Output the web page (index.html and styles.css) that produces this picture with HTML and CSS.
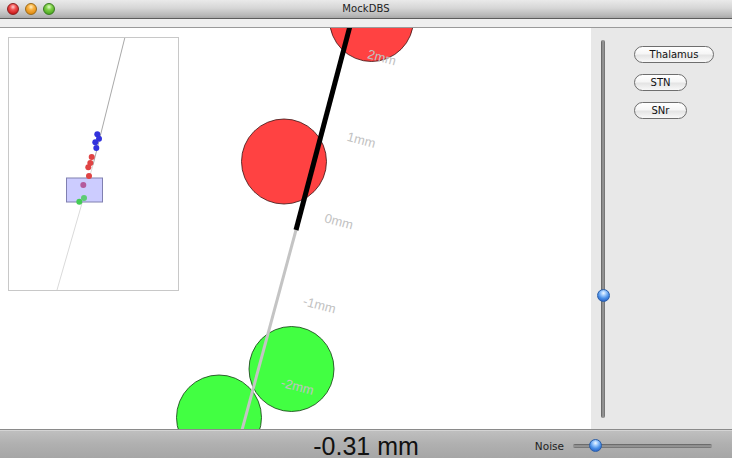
FILE: index.html
```html
<!DOCTYPE html>
<html>
<head>
<meta charset="utf-8">
<title>MockDBS</title>
<link rel="stylesheet" href="styles.css">
</head>
<body>
<div class="window">
  <div class="titlebar">
    <div class="lights">
      <span class="light red"></span>
      <span class="light yellow"></span>
      <span class="light green"></span>
    </div>
    <div class="title">MockDBS</div>
  </div>
  <div class="toolbar"></div>
  <div class="main">
    <div class="canvas">
      <svg class="scene" width="591" height="401" viewBox="0 0 591 401">
        <circle cx="371.5" cy="-8.5" r="42" fill="#ff4242" stroke="#3a1010" stroke-width="0.8"/>
        <circle cx="284" cy="133.5" r="42.5" fill="#ff4242" stroke="#3a1010" stroke-width="0.8"/>
        <circle cx="291.5" cy="341" r="42.5" fill="#42ff42" stroke="#103a10" stroke-width="0.8"/>
        <circle cx="219" cy="389.5" r="42.5" fill="#42ff42" stroke="#103a10" stroke-width="0.8"/>
        <line x1="296" y1="202" x2="242" y2="402" stroke="#c4c4c4" stroke-width="3"/>
        <line x1="350" y1="-2" x2="296" y2="202" stroke="#000" stroke-width="5"/>
        <g class="labels">
          <text x="382" y="34" transform="rotate(15 382 29.5)">2mm</text>
          <text x="361.5" y="116.5" transform="rotate(15 361.5 112)">1mm</text>
          <text x="339" y="198" transform="rotate(15 339 193.5)">0mm</text>
          <text x="319.5" y="281.5" transform="rotate(15 319.5 277)">-1mm</text>
          <text x="297.5" y="363" transform="rotate(15 297.5 358.5)">-2mm</text>
        </g>
      </svg>
      <div class="minimap">
        <svg width="169" height="252" viewBox="1 1 169 252">
          <line x1="117" y1="0" x2="85" y2="128" stroke="#a8a8a8" stroke-width="1"/>
          <line x1="85" y1="128" x2="49" y2="253" stroke="#dadada" stroke-width="1"/>
          <rect x="58.5" y="141" width="36" height="24" fill="#ccccff" stroke="#8080b0" stroke-width="1"/>
          <g fill="#3232dc">
            <circle cx="89.3" cy="97.3" r="3"/>
            <circle cx="91" cy="101.7" r="3"/>
            <circle cx="87.3" cy="105.3" r="3"/>
            <circle cx="88.3" cy="111" r="3"/>
          </g>
          <g fill="#e04444">
            <circle cx="83.7" cy="120" r="3"/>
            <circle cx="82.3" cy="126" r="3"/>
            <circle cx="80.3" cy="130.3" r="3"/>
            <circle cx="81" cy="139" r="3"/>
          </g>
          <circle cx="75.3" cy="148" r="3" fill="#b45a9c"/>
          <circle cx="76" cy="161" r="3" fill="#5ccc74"/>
          <circle cx="71.3" cy="164.7" r="3" fill="#44cc55"/>
        </svg>
      </div>
    </div>
    <div class="side">
      <div class="vslider">
        <div class="vtrack"></div>
        <div class="knob vknob"></div>
      </div>
      <div class="buttons">
        <button class="pill wide">Thalamus</button>
        <button class="pill">STN</button>
        <button class="pill">SNr</button>
      </div>
    </div>
  </div>
  <div class="bottombar">
    <div class="spacer"></div>
    <div class="depth">-0.31 mm</div>
    <div class="noise">
      <span class="noise-label">Noise</span>
      <div class="hslider">
        <div class="htrack"></div>
        <div class="knob hknob"></div>
      </div>
    </div>
  </div>
</div>
</body>
</html>
```

FILE: styles.css
```css
html, body {
  margin: 0;
  padding: 0;
  width: 732px;
  height: 458px;
  overflow: hidden;
  background: #ffffff;
}

.window {
  display: flex;
  flex-direction: column;
  width: 732px;
  height: 458px;
  font-family: "DejaVu Sans", "Liberation Sans", sans-serif;
}

.titlebar {
  position: relative;
  height: 18px;
  flex: none;
  background: linear-gradient(#eaeaea, #d6d6d6 45%, #b8b8b8 85%, #a8a8a8);
  border-bottom: 1px solid #5c5c5c;
  display: flex;
  align-items: center;
  justify-content: center;
}

.lights {
  position: absolute;
  left: 7px;
  top: 3px;
  display: flex;
  gap: 6px;
}

.light {
  width: 12px;
  height: 12px;
  border-radius: 50%;
  box-sizing: border-box;
}

.light.red {
  background: radial-gradient(circle at 50% 30%, #ffd0d0 0, #f05050 35%, #c81818 80%, #901010 100%);
  border: 1px solid #8a2020;
}

.light.yellow {
  background: radial-gradient(circle at 50% 30%, #fff0c0 0, #f8b040 35%, #e08a10 80%, #a86008 100%);
  border: 1px solid #9a6a18;
}

.light.green {
  background: radial-gradient(circle at 50% 30%, #e0ffc8 0, #80d048 35%, #4aa820 80%, #2c7a10 100%);
  border: 1px solid #3a7a20;
}

.title {
  font-size: 10px;
  color: #222;
  line-height: 18px;
  letter-spacing: 0.1px;
}

.toolbar {
  height: 8px;
  flex: none;
  background: #efefef;
  border-bottom: 1px solid #9a9a9a;
}

.main {
  flex: 1;
  display: flex;
  min-height: 0;
}

.canvas {
  position: relative;
  width: 591px;
  flex: none;
  background: #fff;
  overflow: hidden;
}

.scene {
  display: block;
}

.labels text {
  font-family: "Liberation Sans", Arial, sans-serif;
  font-size: 13px;
  fill: #c2c2c2;
  text-anchor: middle;
}

.minimap {
  position: absolute;
  left: 8px;
  top: 9px;
  width: 169px;
  height: 252px;
  border: 1px solid #c8c8c8;
  background: #fff;
}

.minimap svg {
  display: block;
}

.side {
  flex: 1;
  background: #e8e8e8;
  display: flex;
  padding: 12px 0 0 10px;
}

.vslider {
  position: relative;
  width: 4px;
  height: 378px;
  flex: none;
}

.vtrack {
  width: 4px;
  height: 100%;
  border-radius: 2px;
  background: linear-gradient(to right, #5a5a5a, #a0a0a0 50%, #6a6a6a);
}

.knob {
  position: absolute;
  width: 13px;
  height: 13px;
  box-sizing: border-box;
  border-radius: 50%;
  border: 1px solid #2a5ea8;
  background: radial-gradient(circle at 50% 28%, #f0f8ff 0, #a8d0ff 22%, #4a90e8 55%, #2a64c8 85%, #1c50a8 100%);
}

.vknob {
  left: -4.5px;
  top: 249px;
}

.buttons {
  display: flex;
  flex-direction: column;
  align-items: flex-start;
  gap: 11px;
  margin-left: 29px;
  margin-top: 6px;
}

.pill {
  height: 17px;
  width: 53px;
  padding: 0;
  box-sizing: border-box;
  border: 1px solid #6e6e6e;
  border-radius: 9px;
  background: linear-gradient(#ffffff, #f6f6f6 45%, #e4e4e4 55%, #f8f8f8);
  font-family: "DejaVu Sans", "Liberation Sans", sans-serif;
  font-size: 10px;
  line-height: 15px;
  color: #111;
  text-align: center;
}

.pill.wide {
  width: 80px;
}

.bottombar {
  height: 28px;
  flex: none;
  border-top: 1px solid #8a8a8a;
  box-shadow: inset 0 1px 0 #d4d4d4;
  background: linear-gradient(#c0c0c0, #b0b0b0 50%, #a6a6a6);
  display: grid;
  grid-template-columns: 1fr auto 1fr;
  overflow: hidden;
}

.depth {
  font-family: "Liberation Sans", Arial, sans-serif;
  font-size: 25px;
  line-height: 28px;
  padding-top: 2px;
  color: #111;
  white-space: nowrap;
}

.noise {
  display: flex;
  align-items: center;
  justify-content: flex-end;
  padding-right: 20px;
  padding-top: 1px;
  gap: 9px;
}

.noise-label {
  font-size: 10.5px;
  color: #222;
}

.hslider {
  position: relative;
  width: 139px;
  height: 4px;
}

.htrack {
  width: 100%;
  height: 4px;
  border-radius: 2px;
  background: linear-gradient(#5a5a5a, #a0a0a0 50%, #6a6a6a);
}

.hknob {
  left: 15.5px;
  top: -4.5px;
}
```
